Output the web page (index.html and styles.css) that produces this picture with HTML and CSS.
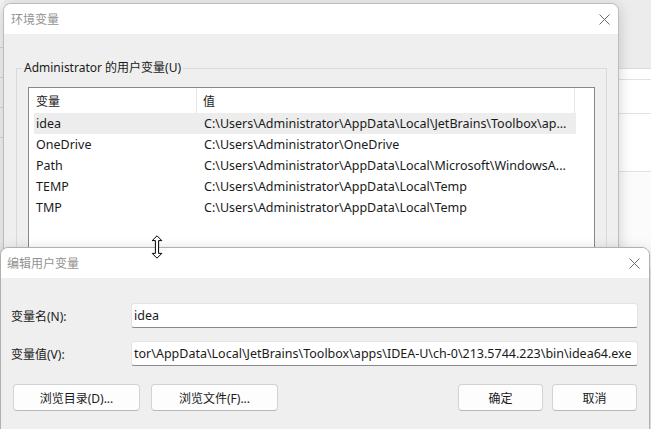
FILE: index.html
```html
<!DOCTYPE html>
<html lang="zh-CN">
<head>
    <meta charset="UTF-8">
    <meta name="viewport" content="width=device-width, initial-scale=1.0">
    <title>编辑用户变量</title>
    <link rel="stylesheet" href="styles.css">
</head>
<body>
    <div class="desktop">
        <!-- window behind, only edges visible -->
        <div class="back-strip">
            <div class="strip-line"></div>
            <div class="strip-line"></div>
            <div class="strip-line"></div>
            <div class="strip-line"></div>
        </div>
        <div class="back-panel">
            <div class="panel-row short"></div>
            <div class="panel-row mid"></div>
            <div class="panel-row tall"></div>
        </div>

        <!-- 环境变量 -->
        <div class="dialog env-dialog">
            <div class="titlebar">
                <span class="title">环境变量</span>
                <svg class="close" width="11" height="11" viewBox="0 0 11 11"><path d="M0.5 0.5L10.5 10.5M10.5 0.5L0.5 10.5" stroke="#6a6a6a" stroke-width="1" fill="none"/></svg>
            </div>
            <div class="dialog-body">
                <fieldset class="group">
                    <legend>Administrator 的用户变量(U)</legend>
                    <div class="listview">
                        <div class="lv-header">
                            <div class="hd-name">变量</div>
                            <div class="hd-value">值</div>
                        </div>
                        <div class="lv-row selected">
                            <div class="cell-name">idea</div>
                            <div class="cell-value">C:\Users\Administrator\AppData\Local\JetBrains\Toolbox\ap...</div>
                        </div>
                        <div class="lv-row">
                            <div class="cell-name">OneDrive</div>
                            <div class="cell-value">C:\Users\Administrator\OneDrive</div>
                        </div>
                        <div class="lv-row">
                            <div class="cell-name">Path</div>
                            <div class="cell-value">C:\Users\Administrator\AppData\Local\Microsoft\WindowsA...</div>
                        </div>
                        <div class="lv-row">
                            <div class="cell-name">TEMP</div>
                            <div class="cell-value">C:\Users\Administrator\AppData\Local\Temp</div>
                        </div>
                        <div class="lv-row">
                            <div class="cell-name">TMP</div>
                            <div class="cell-value">C:\Users\Administrator\AppData\Local\Temp</div>
                        </div>
                    </div>
                </fieldset>
            </div>
        </div>

        <!-- 编辑用户变量 -->
        <div class="dialog edit-dialog">
            <div class="titlebar">
                <span class="title">编辑用户变量</span>
                <svg class="close" width="11" height="11" viewBox="0 0 11 11"><path d="M0.5 0.5L10.5 10.5M10.5 0.5L0.5 10.5" stroke="#6a6a6a" stroke-width="1" fill="none"/></svg>
            </div>
            <div class="dialog-body edit-body">
                <div class="form-row">
                    <label class="form-label">变量名(N):</label>
                    <div class="textbox"><span>idea</span></div>
                </div>
                <div class="form-row">
                    <label class="form-label">变量值(V):</label>
                    <!-- field is scrolled to the end, only the tail shows -->
                    <div class="textbox"><span>tor\AppData\Local\JetBrains\Toolbox\apps\IDEA-U\ch-0\213.5744.223\bin\idea64.exe</span></div>
                </div>
                <div class="button-row">
                    <div class="btn-group">
                        <button class="btn wide">浏览目录(D)...</button>
                        <button class="btn wide">浏览文件(F)...</button>
                    </div>
                    <div class="btn-group right">
                        <button class="btn">确定</button>
                        <button class="btn">取消</button>
                    </div>
                </div>
            </div>
            <svg class="grip" width="10" height="10" viewBox="0 0 10 10">
                <rect x="8" y="0" width="1.5" height="1.5" fill="#b8b8b8"/>
                <rect x="4" y="4" width="1.5" height="1.5" fill="#b8b8b8"/>
                <rect x="8" y="4" width="1.5" height="1.5" fill="#b8b8b8"/>
                <rect x="0" y="8" width="1.5" height="1.5" fill="#b8b8b8"/>
                <rect x="4" y="8" width="1.5" height="1.5" fill="#b8b8b8"/>
                <rect x="8" y="8" width="1.5" height="1.5" fill="#b8b8b8"/>
            </svg>
        </div>

        <!-- resize cursor -->
        <svg class="cursor" width="12" height="24" viewBox="0 0 12 24">
            <path d="M6 0.8L10.8 5.6H7.6V18.4H10.8L6 23.2L1.2 18.4H4.4V5.6H1.2Z" fill="#fff" stroke="#000" stroke-width="1" stroke-linejoin="miter"/>
        </svg>
    </div>
</body>
</html>
```

FILE: styles.css
```css
* {
    box-sizing: border-box;
}
html, body {
    margin: 0;
    padding: 0;
}
body {
    font-family: "Noto Sans", "Noto Sans CJK SC", sans-serif;
    font-size: 12px;
    color: #1a1a1a;
    background: #ececec;
}
.desktop {
    position: relative;
    width: 651px;
    height: 429px;
    overflow: hidden;
    background: #ececec;
}

/* window behind */
.back-strip {
    position: absolute;
    left: 0;
    top: 0;
    width: 4px;
    height: 250px;
    padding-top: 47px;
    background: #f3f3f3;
}
.strip-line {
    height: 1px;
    background: #d6d6d6;
    margin-bottom: 29px;
}
.back-panel {
    position: absolute;
    left: 612px;
    top: 68px;
    width: 40px;
    height: 200px;
    background: #fbfbfb;
    border-top: 1px solid #dadada;
}
.panel-row {
    border-bottom: 1px solid #e2e2e2;
    background: #fff;
}
.panel-row.short { height: 11px; }
.panel-row.mid { height: 34px; }
.panel-row.tall { height: 58px; }

/* dialogs */
.dialog {
    position: absolute;
    display: flex;
    flex-direction: column;
    background: #efefef;
    border: 1px solid #bdbdbd;
    border-radius: 8px;
    box-shadow: 0 3px 14px rgba(0,0,0,0.18);
    overflow: hidden;
}
.env-dialog {
    left: 3px;
    top: 3px;
    width: 616px;
    height: 320px;
}
.edit-dialog {
    left: 0;
    top: 247px;
    width: 650px;
    height: 200px;
    border-color: #b0b0b0;
}
.titlebar {
    display: flex;
    align-items: center;
    justify-content: space-between;
    height: 30px;
    flex-shrink: 0;
    background: #fff;
    padding: 0 9px 0 7px;
}
.title {
    color: #929292;
    font-size: 12px;
}
.env-dialog .titlebar {
    padding-right: 8px;
}
.edit-dialog .titlebar {
    padding-left: 6px;
    padding-right: 9px;
}

.dialog-body {
    flex: 1;
    padding: 26px 11px 0 12px;
}

/* group box */
.group {
    margin: 0;
    padding: 11px 11px 0 11px;
    border: 1px solid #dadada;
    min-width: 0;
    height: 300px;
}
.group legend {
    margin-left: -6px;
    padding: 0 2px;
    line-height: 16px;
    font-size: 12px;
    color: #1a1a1a;
}

/* list view */
.listview {
    background: #fff;
    border: 1px solid #838790;
    height: 260px;
}
.lv-header {
    display: flex;
    height: 25px;
    align-items: stretch;
}
.hd-name, .hd-value {
    display: flex;
    align-items: center;
    border-right: 1px solid #e5e5e5;
}
.hd-name {
    width: 168px;
    padding-left: 7px;
}
.hd-value {
    width: 378px;
    padding-left: 6px;
}
.lv-row {
    display: flex;
    align-items: center;
    height: 21px;
    width: 542px;
    margin-left: 5px;
    white-space: nowrap;
    font-size: 12.5px;
}
.lv-row.selected {
    background: #ededed;
}
.cell-name {
    width: 163px;
    padding-left: 2px;
}
.cell-value {
    padding-left: 7px;
}

/* edit dialog form */
.edit-body {
    padding: 25px 11px 0 10px;
}
.form-row {
    display: flex;
    align-items: center;
    margin-bottom: 13px;
}
.form-label {
    width: 120px;
    flex-shrink: 0;
}
.textbox {
    display: flex;
    align-items: center;
    flex: 1;
    height: 25px;
    padding: 0 3px 0 2px;
    font-size: 12.5px;
    background: #fff;
    border: 1px solid #e3e3e3;
    border-bottom-color: #8a8a8a;
    border-radius: 3px;
    overflow: hidden;
    white-space: nowrap;
}

.button-row {
    display: flex;
    justify-content: space-between;
    margin-top: 18px;
    padding: 0 1px 0 2px;
}
.btn-group {
    display: flex;
    gap: 11px;
}
.btn-group.right {
    gap: 9px;
}
.btn {
    width: 85px;
    height: 27px;
    padding: 0;
    font-family: inherit;
    font-size: 12px;
    color: #1a1a1a;
    background: #fdfdfd;
    border: 1px solid #d3d3d3;
    border-bottom-color: #b9b9b9;
    border-radius: 4px;
}
.btn.wide {
    width: 127px;
}

.grip {
    position: absolute;
    right: 1px;
    bottom: -1px;
}

.cursor {
    position: absolute;
    left: 151px;
    top: 235px;
}
```
